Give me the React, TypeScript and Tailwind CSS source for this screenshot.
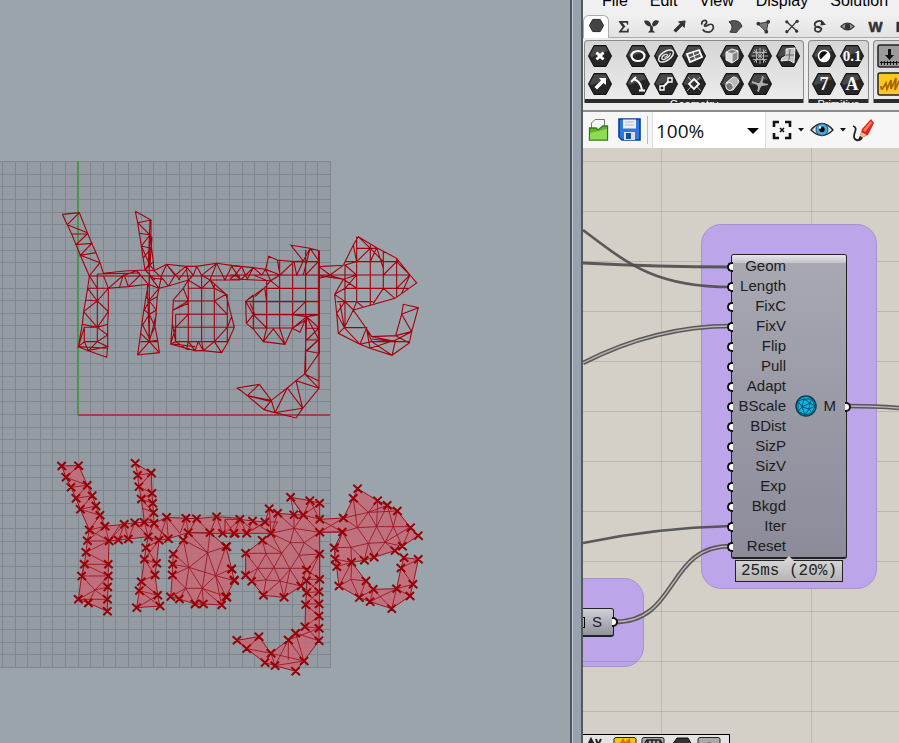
import React from "react";

/* ---------- viewport drawing ---------- */

const gridSteps = Array.from({ length: 41 }, (_, i) => i);

const wireLeft =
  "M67 43L118 38L142 98L155 130L168 158L180 188L190 220M67 43L82 74L95 102L108 134L121 166L148 228" +
  "M82 74L118 38M82 74L142 98M95 102H142L108 134L155 130L121 166L168 158M121 166L180 188L148 228" +
  "M148 228L143 265L137 300L131 335L127 373L115 440L145 452L200 472L203 440V373L205 335V265H143" +
  "M172 222V425H133V382H172M148 228L172 265M143 265L172 303L205 265M137 300L172 303L131 335L172 382L205 335L172 303" +
  "M127 373L172 382L203 373M172 382L203 405L172 425L145 452L203 440L172 425M133 425L115 440L133 382M115 440L200 445M145 452L133 425" +
  "M190 220L255 213L315 210L342 212M148 228H600M172 222L300 219M205 265L265 260L325 253" +
  "M205 265L250 226L238 263M190 226L205 265M265 260L253 226L290 212L300 226L265 260M290 212L325 253" +
  "M286 34L333 60V130L340 185L342 212M286 34L293 68L304 138L315 210M293 68L333 60M293 68L330 105L299 100M330 105L304 138L333 145L309 175M304 138L325 185M330 60L325 195L315 210M330 105L327 250M340 185L315 210L345 240M336 110L330 195L345 215" +
  "M325 253L318 290L310 340L302 400L293 465L358 458L353 420L345 380L349 330L352 290L357 265L325 253M328 210V425" +
  "M318 290L328 303L349 330L328 343L313 330L328 303M352 290L328 303M328 343L345 380L328 415L308 375L328 343M357 265L328 300M353 420L328 425L302 400M328 425L293 465M328 425L358 458M302 425H353M328 226L357 265L365 226M322 255L328 425L350 340" +
  "M342 212L380 193L438 199L470 199L530 190L600 200M357 265L385 258L445 240L485 265L510 240H600" +
  "M345 215L370 238L385 258M365 226L380 193L405 226L385 258M405 226L438 199L445 240M380 193L420 240M438 199L460 226L470 199L485 226L510 240L530 190L555 240L575 199L600 235M485 226L530 190M445 240L460 226M438 210L415 240M340 235L370 238" +
  "M430 265L400 300L397 370L392 432L465 452L490 452L545 458L562 430L583 382L575 350L558 283L510 240M430 265L445 240" +
  "M445 240V425M485 226V425M523 255V425M562 283V430M445 265H523M400 303H523M407 343H562M395 382H562M407 425H562M407 343V425" +
  "M430 265L445 303L400 330M400 330L445 310M407 382L445 343M523 265L510 240M523 303L558 283L523 265M523 303L562 343M575 350L562 382L583 382M392 432L407 382M392 432L407 425L440 447L445 425L465 452L475 425L490 452L485 425M490 452L523 425L545 458M400 432L465 440M562 382L523 425M397 370L407 425";

const wireRight =
  "M0 121L70 128L107 133L116 94L142 105L192 110L220 108L183 61L240 70L267 77V490L218 550L198 579L135 563L102 554L52 512L22 489L88 478L124 526L172 489L198 467L224 447L230 275L210 322L187 310L165 358L100 350L70 312L49 295L47 229L104 188L122 167L0 162" +
  "M0 150H267M0 162L15 150L35 125L52 162L70 128L95 150L107 133L122 167M35 162L70 128M15 150L35 165M70 150L107 165M116 94L107 133L150 150L142 105M150 150L122 167L150 190M150 150L192 110L200 150L220 108M183 61L220 108L240 70L220 150M240 70L267 108L227 150M192 110H267" +
  "M110 190H267M47 230H267M70 269H267M70 309H187M110 165V309M149 105V309M188 110V309M227 75V447M70 210V309M104 188L110 230M70 210L47 229L70 269L49 295M60 235L75 269M104 188L75 215M70 269L110 309L100 350L130 312L165 358L149 309M187 269L230 275L187 310L227 285M227 230L187 269M267 269L230 275L267 309L230 345H265L230 378L267 385L224 447M230 275L267 345M230 310H267M228 378L265 345M187 310L210 322" +
  "M224 447L267 490L198 467L218 550L172 489L135 563L218 550M135 563L124 526L52 512L88 478M102 554L124 526M224 447L265 467M52 512L124 530" +
  "M267 125L340 121L370 60L385 35L440 68L500 100L540 150L560 174L495 220L400 247L370 255L410 312L425 335L497 332L515 268L520 238L565 248L545 320L538 354L486 391L420 370L390 358L325 325L320 265L314 208L340 163L267 152M267 150H540M267 160L300 152L340 163M267 125L300 150L340 121" +
  "M380 35V230M421 60V240M460 78V190L430 235M500 100V215M380 70H440M345 110H505M342 190H535M320 230H430M370 60L380 110L345 120L380 150L340 163L380 190M380 110L421 70M385 35L421 70L460 110M440 68L421 110M440 68L460 130M460 150L500 110M500 110L540 150L500 190M540 150L515 205M460 190L495 220M380 150L345 190M345 120V310M314 208L345 190M320 265L345 230L370 255L380 230L400 247M320 265L343 308L370 255M314 208L345 230M330 235L343 308H410L390 358L343 308L325 325M410 312L425 350L390 358M425 335L497 350L425 342M497 332L538 354M425 350H538M497 345L486 391L425 350M420 370L410 312M497 345L420 370M515 268L545 320L497 332M515 268L565 248M497 345L545 320";

const solidLeft =
  "M65 48L116 47L142 106L157 137L168 168L180 196L195 229L253 223L285 218L313 217L308 175L304 147L297 110L293 76L286 40L334 69L336 130L338 160L341 188L342 220L380 202L438 205L470 206L530 200L600 205V250H510L445 248L385 266L357 271L350 340L345 375L353 436L360 468L290 473L298 422L304 395L313 328L318 293L325 260L265 267L235 270L207 273L205 343V378L202 484L145 459L115 448L125 378L133 343L138 307L142 272L148 240L121 178L108 145L93 112L78 82Z" +
  "M430 270L445 248H510L558 290L575 357L583 392L558 440L545 465L490 462L465 462L418 447L392 440L397 375L398 343L400 312Z";
const edgesLeft =
  "M78 82L116 47M78 82L142 106L93 112M108 145L142 106M108 145L157 137L121 178L168 168M121 178L180 196L148 240L195 229M148 240L207 273H142L195 229L207 273M207 273L138 307L205 343H133L205 378H125M133 343L125 378L165 420L205 378M165 420L115 448H202L165 420L203 411M165 420L145 459M207 273L253 223L235 270M265 267L253 223M265 267L285 218L325 260L313 217M207 273L240 225M293 76L334 69L297 110L336 130L304 147L338 160M304 147L341 188L308 175M341 188L313 217H342L325 260L357 271L380 202L385 266L342 220M318 293L357 271L313 328L350 340L318 293M313 328L345 375L304 395L353 436L298 422M298 422L360 468M290 473L353 436M380 202L420 250L438 205L445 248L470 206L510 248L530 200L548 250L600 205M345 230L385 266" +
  "M430 270L503 308L510 248M445 248L503 308L558 290L527 377L503 308L447 352L400 312M430 270L447 352L398 343M447 352L397 375L437 415L447 352L487 415L503 308M447 352L527 377L487 415H437L392 440M437 415L418 447M437 415L465 462L487 415L490 462M487 415L545 465L527 377L575 357M527 377L583 392M527 377L558 440L487 415";
const marksLeft = "65,48 116,47 142,106 157,137 168,168 180,196 195,229 253,223 285,218 313,217 304,147 297,110 293,76 286,40 334,69 336,130 338,160 341,188 342,220 380,202 438,205 470,206 530,200 585,250 548,250 510,248 445,248 385,266 357,271 350,340 345,375 353,436 360,468 290,473 298,422 304,395 313,328 318,293 325,260 265,267 235,270 207,273 205,343 205,378 203,411 202,448 202,484 145,459 115,448 125,378 133,343 138,307 142,272 148,240 121,178 108,145 93,112 78,82 430,270 558,290 575,357 583,392 558,440 545,465 490,462 465,462 418,447 392,440 397,375 398,343 400,312";

const solidRight =
  "M0 118H45L83 123L120 126L133 86L158 100L207 104L235 105L197 52L255 62L284 70V118L355 114L385 55L398 26L458 62L487 76L517 93L557 143L580 167L532 199L510 212L447 232L418 241L380 247L423 303L445 328L515 326L528 264L537 233L580 238L564 313L555 348L500 386L435 365L403 353L342 318L335 260L330 237L328 203L352 156L284 157V298L282 482L237 543L212 574L150 557L120 548L65 506L36 481L102 470L138 520L190 480L212 460L240 440L242 374L245 338V302L228 318L177 352L115 346L80 304L62 286V220L112 181L138 160H0Z";
const edgesRight =
  "M0 120L27 160L45 118L65 160L83 123L138 160M0 160L45 118L83 150L120 126L65 160M120 126H158L138 160L133 86M158 100L138 160L207 145L158 100M207 104V145L235 105L284 157L207 145L196 188L238 188L207 145M197 52L207 104M197 52L235 105L255 62L284 118L235 105L284 70M284 157L238 188L222 226L196 188L170 220L138 160L196 188M112 181L170 220H62M112 181L123 222L98 265L62 220M123 222L147 262L170 220L195 268L222 226L245 270L284 222L238 188M222 226L284 222M62 286L98 265H245L228 318L195 268L165 303L147 262L123 300L98 265L80 304L123 300L165 303L228 318M123 300L115 346L165 303L177 352L195 268M245 302L284 222V298L245 270M245 302L284 335L245 338L284 298H245M245 338L282 372H242L282 335M242 374L282 408L240 440L282 445L190 480M240 440L282 482L212 460L237 543L190 480V540M138 520L237 543M138 520L150 557L190 480M120 548L138 520L65 506L102 470M150 557L237 543" +
  "M284 118L352 156L284 157L355 114L397 143L352 156L378 202L430 190L397 143L430 97L385 55L397 143L455 140L430 97L458 62L455 140L480 187L430 190L455 140L487 76L505 140H455M355 114L430 97L517 93L505 140L480 187L532 199L505 140H557L480 187M557 143L532 199M480 187L510 212M430 97L487 76M430 190L447 232L480 187M328 203L378 202L380 247L330 237M335 260L380 247L342 318L378 298L403 353L423 303L378 298L380 247M378 202L418 241L430 190M352 156L328 230M403 353L445 328L435 365L515 326L500 386L445 328M515 326L555 348M528 264L564 313L515 326M528 264L580 238";
const marksRight = "5,200 20,267 28,300 5,352 45,118 83,123 120,126 133,86 158,100 207,104 235,105 197,52 255,62 284,70 284,118 355,114 385,55 398,26 458,62 487,76 517,93 557,143 580,167 532,199 510,212 447,232 418,241 380,247 423,303 445,328 515,326 528,264 537,233 580,238 564,313 555,348 500,386 435,365 403,353 342,318 335,260 330,237 328,203 352,156 284,157 284,222 284,298 282,335 282,372 282,408 282,445 282,482 237,543 212,574 150,557 120,548 65,506 36,481 102,470 138,520 190,480 212,460 240,440 242,374 245,338 245,302 245,270 228,318 177,352 115,346 80,304 62,286 62,220 112,181 138,160 65,160 27,160";

function Crosses({ points }: { points: string }) {
  const d = points
    .split(" ")
    .map((p) => {
      const [x, y] = p.split(",").map(Number);
      return `M${x - 13} ${y - 12}L${x + 13} ${y + 12}M${x + 12} ${y - 12}L${x - 12} ${y + 12}`;
    })
    .join("");
  return <path d={d} fill="none" stroke="#960006" strokeWidth="6" />;
}

function Viewport() {
  return (
    <section aria-label="Top viewport" className="min-w-0 flex-1 overflow-hidden bg-[#9ba3ab]">
      <svg width="570" height="743" viewBox="0 0 570 743" className="block">
        <rect x="0" y="161" width="330" height="507" fill="#949ba2" />
        <g stroke="#7f868e" strokeWidth="1" shapeRendering="crispEdges">
          {gridSteps.map((i) => {
            const y = Math.round(161 + i * 12.65) + 0.5;
            return <line key={"h" + i} x1="0" x2="331" y1={y} y2={y} />;
          })}
          {gridSteps.slice(0, 27).map((i) => {
            const x = Math.round(2 + i * 12.61) + 0.5;
            return <line key={"v" + i} x1={x} x2={x} y1="161" y2="668" />;
          })}
        </g>
        <path d="M78 161V415" stroke="#4b9350" strokeWidth="2" />
        <path d="M78 415H330" stroke="#a04049" strokeWidth="2" />
        <g fill="none" stroke="#a3000c" strokeWidth="3.3">
          <path d={wireLeft} transform="translate(40 200) scale(.3333)" />
          <path d={wireRight} transform="translate(230 225) scale(.3333)" />
          <path d="M319 251V354" strokeWidth="1.6" />
        </g>
        <g transform="translate(40 450) scale(.3333)">
          <path d={solidLeft} fill="#c56a76" fillOpacity=".85" stroke="#9b1420" strokeWidth="3" />
          <path d={edgesLeft} fill="none" stroke="#9b1420" strokeWidth="2.6" />
          <Crosses points={marksLeft} />
        </g>
        <g transform="translate(225 480) scale(.3333)">
          <path d={solidRight} fill="#c56a76" fillOpacity=".85" stroke="#9b1420" strokeWidth="3" />
          <path d={edgesRight} fill="none" stroke="#9b1420" strokeWidth="2.6" />
          <Crosses points={marksRight} />
        </g>
      </svg>
    </section>
  );
}

/* ---------- menu and tabs ---------- */

const menus = ["File", "Edit", "View", "Display", "Solution"];

const tabs: { name: string; icon: React.ReactNode }[] = [
  { name: "Params", icon: <path d="M4 1.500H12L15.500 8L12 14.500H4L.5 8Z" fill="#444" stroke="#222" /> },
  {
    name: "Maths",
    icon: <path d="M3 2H13V6H12L11 4H7L10 8L6 12.500H11.500L12.500 10H13.500V14.500H3V13.500L7 8.500L3 3Z" fill="#333" />,
  },
  {
    name: "Sets",
    icon: <path d="M0 2C5 0 8 4 7.500 8C4 8 1 6 0 2ZM16 2C11 0 8.500 3 8.500 8C12 8 15 6 16 2ZM6.500 7H9.500V12L12 14.500H4L6.500 12Z" fill="#333" />,
  },
  { name: "Vector", icon: <path d="M7 3L14 2L13 9L11 7L4 14L2 12L9 5Z" fill="#333" stroke="#333" /> },
  {
    name: "Curve",
    icon: <path d="M2 6C1 1 8 0 7 4C6 6 4 6 5 7.500C7 9 10 4 13 6C16 9 13 14 9 14C6 14 4 13 3 11" fill="none" stroke="#333" strokeWidth="1.800" />,
  },
  { name: "Surface", icon: <path d="M1 3Q8 0 13 4L15 8Q12 10 9 14.500L2 14Q7 8 1 3Z" fill="#555" stroke="#333" /> },
  {
    name: "Mesh",
    icon: (
      <>
        <path d="M2 5L13 3L11 14Z" fill="#777" stroke="#333" />
        <g fill="#333"><circle cx="2.500" cy="5" r="2" /><circle cx="13" cy="3" r="2" /><circle cx="11" cy="13.500" r="2" /></g>
      </>
    ),
  },
  {
    name: "Intersect",
    icon: (
      <>
        <path d="M3 3Q7 7 14 13M14 2L3 14" fill="none" stroke="#333" strokeWidth="1.400" />
        <g fill="#333"><circle cx="3" cy="3" r="1.700" /><circle cx="14" cy="2.500" r="1.700" /><circle cx="3" cy="13.500" r="1.700" /><circle cx="13.500" cy="13" r="1.700" /></g>
      </>
    ),
  },
  {
    name: "Transform",
    icon: (
      <>
        <path d="M12 4C8 0 2 3 3 7C4 10 11 8 10 11C9 15 3 14 3 11C3 8 8 7 9 10" fill="none" stroke="#333" strokeWidth="1.800" />
        <path d="M10 1L15 6L9 7Z" fill="#333" />
      </>
    ),
  },
  {
    name: "Display",
    icon: (
      <>
        <path d="M1 8Q8 1 15 8Q8 15 1 8Z" fill="#aaa" stroke="#333" strokeWidth="1.300" />
        <circle cx="8" cy="8" r="3" fill="#333" />
      </>
    ),
  },
  {
    name: "Wb",
    icon: (
      <text x="8" y="14" textAnchor="middle" stroke="#333" strokeWidth=".6" className="fill-[#333] font-['Liberation_Sans'] text-[16px] font-bold">W</text>
    ),
  },
  { name: "Extra", icon: <path d="M2 3V14" stroke="#333" strokeWidth="3" /> },
];

/* ---------- ribbon ---------- */

const w = { fill: "none", stroke: "#fff", strokeWidth: 1.6 };

const glyphs: Record<string, React.ReactNode> = {
  Point: <path d="M8.500 7.500L15.500 14.500M15.500 7.500L8.500 14.500" {...w} strokeWidth="3" />,
  Vector: <path d="M11 5H18V12L15.500 10L9 16.500L6.500 14L13 7.500Z" fill="#fff" />,
  Circle: <ellipse cx="12" cy="11" rx="6.500" ry="5" {...w} strokeWidth="2.200" />,
  Curve: (
    <g fill="none" stroke="#eee" transform="rotate(-35 12 11)">
      <ellipse cx="12" cy="11" rx="8.500" ry="4.500" strokeWidth="1.500" />
      <path d="M17 11C16 14 7 14 7 11C8 8 14 9 14 11C13 12 11 12 10 11" strokeWidth="1.200" />
    </g>
  ),
  Surface: (
    <>
      <path d="M5 9L17 5L20 12L8 17Z" fill="#555" stroke="#fff" strokeWidth="1.800" />
      <path d="M11 7L12 11L14 15M7 13L19 8" fill="none" stroke="#fff" />
    </>
  ),
  Box: (
    <>
      <path d="M6 7L12 4L18 6V14L12 18L6 15Z" fill="#888" />
      <path d="M6 7L12 9V18L6 15Z" fill="#ddd" />
      <path d="M6 7L12 4L18 6V14L12 18L6 15ZM6 7L12 9L18 6M12 9V18" fill="none" stroke="#f2f2f2" />
    </>
  ),
  Mesh: <path d="M5 7.500H19M4 11H20M5 14.500H19M8.500 4V18M12 3V19M15.500 4V18M6 5L18 17M18 5L6 17" {...w} strokeWidth=".8" stroke="#ccc" />,
  Geometry: (
    <>
      <path d="M10 4L19 3L18 18L13 15L5 16L6 13L10 11Z" fill="#c4c4c4" stroke="#eee" />
      <path d="M14 4L13 15M10 10L18 10" stroke="#666" fill="none" />
    </>
  ),
  Arc: <path d="M7 6Q15 8 16 17M5 9L10 4M13 17.500H19" {...w} strokeWidth="2" />,
  Line: (
    <>
      <path d="M8 15L16 7" {...w} strokeWidth="2" />
      <path d="M6 13H10V17H6ZM14 5H18V9H14Z" fill="#222" stroke="#fff" strokeWidth="1.400" />
    </>
  ),
  Plane: (
    <>
      <path d="M6 4L19 18M18 4L5 18" stroke="#aaa" />
      <path d="M12 6L17 11L12 16L7 11Z" fill="#333" stroke="#fff" strokeWidth="1.800" />
    </>
  ),
  Brep: (
    <>
      <path d="M6 10L13 4Q18 4 19 9L13 17Q6 18 6 10Z" fill="#bbb" stroke="#eee" />
      <ellipse cx="9.500" cy="13.500" rx="3.500" ry="4" fill="#777" stroke="#eee" transform="rotate(-30 9.500 13.500)" />
    </>
  ),
  Field: <path d="M4 8Q9 10 11 10Q13 9 14 3L16 4Q14 8 15 10L20 11V12L14 13Q12 14 11 19L9 18Q11 14 9 12L4 10Z" fill="#b0b0b0" />,
  Boolean: (
    <>
      <circle cx="12" cy="11" r="5.500" fill="#111" stroke="#fff" strokeWidth="1.600" />
      <path d="M16 7A5.500 5.500 0 0 1 8 15Z" fill="#fff" />
    </>
  ),
  Number: (
    <text x="12" y="16" textAnchor="middle" className="fill-white font-['Liberation_Serif'] text-[15px] font-bold">0.1</text>
  ),
  Integer: (
    <text x="12" y="17" textAnchor="middle" className="fill-white font-['Liberation_Serif'] text-[18px] font-bold">7</text>
  ),
  Text: (
    <text x="12" y="17" textAnchor="middle" className="fill-white font-['Liberation_Serif'] text-[18px] font-bold">A</text>
  ),
};

function Hex({ name }: { name: string }) {
  return (
    <button type="button" aria-label={name} className="size-6">
      <svg viewBox="0 0 24 22" className="h-[22px] w-6">
        <path d="M6 .5H18L23.500 11L18 21.500H6L.5 11Z" fill="#262626" stroke="#111" />
        <path d="M6.500 1.500H17.500L20 6L4 12L1.500 11Z" fill="#484848" />
        {glyphs[name]}
      </svg>
    </button>
  );
}

function IconGrid({ rows }: { rows: string[][] }) {
  return (
    <div className="flex flex-col gap-1">
      {rows.map((row) => (
        <div key={row[0]} className="flex gap-1">
          {row.map((n) => (
            <Hex key={n} name={n} />
          ))}
        </div>
      ))}
    </div>
  );
}

const Divider = () => <div className="h-[50px] w-px bg-[#bdbdbd]" />;

function Panel({ title, className, children }: { title: string; className: string; children: React.ReactNode }) {
  return (
    <div className={`flex h-[63px] shrink-0 flex-col overflow-hidden rounded-t border border-b-0 border-[#8a8a8a] bg-linear-to-b from-[#d5d5d5] to-[#ededed] ${className}`}>
      <div className="flex h-[58px] gap-[7px] px-[3px] pt-[3px]">{children}</div>
      <div className="h-1 overflow-hidden bg-[#2b2b2b] text-center text-[11px] leading-[10px] text-white">{title}</div>
    </div>
  );
}

function SquareButton({ name, yellow }: { name: string; yellow?: boolean }) {
  return (
    <button type="button" aria-label={name} className="size-6">
      <svg viewBox="0 0 24 24" className="size-6">
        <rect x="1" y="1" width="26" height="22" rx="2" fill={yellow ? "#fbc823" : "#9b9b9b"} stroke="#222" strokeWidth="1.500" />
        {yellow ? (
          <path d="M4 14Q4 19 6 16L9 11L10 17L14 8L14 17L19 6L18 18L22 9" fill="none" stroke="#a86400" strokeWidth="1.800" />
        ) : (
          <path d="M11 5H14V11H17L12.500 16L8 11H11ZM3 18H24V19H3ZM4 17H5V21H4ZM7 17H8V21H7ZM10 17H11V21H10ZM13 17H14V21H13ZM16 17H17V21H16ZM19 17H20V21H19Z" fill="#111" />
        )}
      </svg>
    </button>
  );
}

/* ---------- toolbar ---------- */

const Caret = () => (
  <svg viewBox="0 0 6 4" className="h-1 w-[6px]">
    <path d="M0 0H6L3 3.500Z" fill="#111" />
  </svg>
);

function Toolbar() {
  return (
    <div className="flex h-9 shrink-0 items-center overflow-hidden bg-[#f6f6f6] pl-[5px]">
      <button type="button" aria-label="Open" className="mr-2 shrink-0">
        <svg width="22" height="24" viewBox="0 0 22 24">
          <path d="M3.500 12V5L7 1.500H16.500V12" fill="#f6f6f6" stroke="#777" />
          <path d="M1.500 22V10H8L10 12L15 8H19.500V22Z" fill="#62b42c" stroke="#35761c" strokeWidth="1.300" />
          <path d="M2 21.500V15L19 11V21.500Z" fill="#8fdc52" />
        </svg>
      </button>
      <button type="button" aria-label="Save" className="mr-[6px] shrink-0">
        <svg width="23" height="24" viewBox="0 0 23 24">
          <path d="M1 1H22V22H4L1 19Z" fill="#2d79dc" stroke="#0b3c91" strokeWidth="1.600" />
          <rect x="5" y="1.500" width="13" height="9" fill="#eee" />
          <path d="M7 4H16M7 7H16" stroke="#bbb" />
          <rect x="6" y="14" width="11" height="8" fill="#ddd" />
          <rect x="8" y="15" width="5" height="6" fill="#174ea5" />
        </svg>
      </button>
      <div className="mr-1 h-7 w-px shrink-0 bg-[#bbb]" />
      <label className="relative mr-[6px] h-9 w-[114px] shrink-0">
        <span className="sr-only">Zoom</span>
        <select className="h-full w-full appearance-none border-x border-[#ddd] bg-white pt-[2px] pl-[3px] font-['Open_Sans',sans-serif] text-[19px] text-[#111]">
          <option>100%</option>
        </select>
        <svg viewBox="0 0 12 6" className="pointer-events-none absolute top-4 right-[7px] h-[6px] w-3">
          <path d="M0 0H12L6 6Z" fill="#000" />
        </svg>
      </label>
      <button type="button" aria-label="Zoom extents" className="mr-[6px] shrink-0">
        <svg width="20" height="20" viewBox="0 0 20 20" fill="none" stroke="#111" strokeWidth="2.600">
          <path d="M7 2H2V7M13 2H18V7M2 13V18H7M18 13V18H13" />
          <path d="M8 8L12 12M12 8L8 12" strokeWidth="1.600" />
        </svg>
      </button>
      <Caret />
      <button type="button" aria-label="Preview" className="mx-[6px] shrink-0">
        <svg width="24" height="18" viewBox="0 0 24 18">
          <path d="M1 9Q12 -4 23 9Q12 20 1 9Z" fill="#cfe8f4" stroke="#222" strokeWidth="1.300" />
          <circle cx="12" cy="8.500" r="6" fill="#4da5d8" stroke="#1c4a68" />
          <circle cx="12" cy="8.500" r="2.700" fill="#000" />
          <circle cx="10" cy="6.500" r="1.200" fill="#fff" />
        </svg>
      </button>
      <Caret />
      <button type="button" aria-label="Sketch" className="ml-1 shrink-0">
        <svg width="24" height="24" viewBox="0 0 24 24">
          <path d="M3 8Q7 9 5 14T5 21Q8 24 12 20" fill="none" stroke="#222" strokeWidth="1.800" />
          <path d="M9 21L12 11L21 1L24 5L18 17Z" fill="#d6281c" />
          <path d="M13 12L21 3L22 5L15 14Z" fill="#ff7a5c" />
          <path d="M9 21L11 14L17 17Z" fill="#e9b98a" />
          <path d="M8 22L10 18L13 20Z" fill="#222" />
        </svg>
      </button>
    </div>
  );
}

/* ---------- node canvas ---------- */

const inputs = ["Geom", "Length", "FixC", "FixV", "Flip", "Pull", "Adapt", "BScale", "BDist", "SizP", "SizV", "Exp", "Bkgd", "Iter", "Reset"];

const doubleWires = [
  "M583 363C630 339 680 326 731 326",
  "M614 622C680 622 665 546 731 546",
  "M847 406Q875 406 899 408",
];

function Wires() {
  return (
    <svg width="316" height="595" viewBox="583 148 316 595" className="absolute inset-0" fill="none">
      <g stroke="#4d4a4c" strokeOpacity=".9">
        <path d="M583 263C640 266 680 267 731 267" strokeWidth="3" />
        <path d="M583 230C628 264 655 287 731 287" strokeWidth="2.600" />
        <path d="M583 543C640 531 690 527 731 526" strokeWidth="2.600" />
        {doubleWires.map((d) => (
          <path key={d} d={d} strokeWidth="4.600" />
        ))}
      </g>
      {doubleWires.map((d) => (
        <path key={d} d={d} stroke="#b9b4b4" strokeWidth="1.400" />
      ))}
    </svg>
  );
}

const portLeft = "absolute -left-[5px] h-[10px] w-[6px] rounded-l-full border-2 border-r-0 border-[#151515] bg-white";
const portRight = "absolute -right-[5px] h-[10px] w-[6px] rounded-r-full border-2 border-l-0 border-[#151515] bg-white";
const nodeFont = "font-['Liberation_Sans',Arial,sans-serif] text-[15px] text-[#1c1c20]";

function Canvas() {
  return (
    <main className="relative min-h-0 flex-1 overflow-hidden bg-[#d4d0c8]">
      <svg width="316" height="595" viewBox="583 148 316 595" className="absolute inset-0" stroke="#bebab3" shapeRendering="crispEdges">
        <path d="M661.500 148V743M811.500 148V743" />
      </svg>
      <div className="absolute top-[76px] left-[118px] h-[365px] w-[176px] rounded-[20px] border border-[#a692cc] bg-[#bca6e9]" />
      <div className="absolute top-[430px] -left-6 h-[89px] w-[85px] rounded-[20px] border border-[#a692cc] bg-[#bca6e9]" />
      <svg width="316" height="595" viewBox="583 148 316 595" className="absolute inset-0" stroke="#000" strokeOpacity=".12" shapeRendering="crispEdges">
        <path d="M583 161.500H899M583 211.500H899M583 261.500H701M877 261.500H899M583 311.500H701M877 311.500H899M583 361.500H701M877 361.500H899M583 411.500H701M877 411.500H899M583 461.500H701M877 461.500H899M583 511.500H701M877 511.500H899M583 561.500H701M877 561.500H899M644 611.500H899M583 661.500H899M583 711.500H899" />
      </svg>
      <Wires />

      <article aria-label="Mesh machine" className="absolute top-[106px] left-[148px] w-[116px] rounded-[3px] border border-b-2 border-[#222] bg-linear-to-b from-[#a9a9b3] to-[#8b8b9a]">
        <div className="absolute inset-x-0 top-0 h-2 rounded-t-[2px] bg-linear-to-b from-[#e6e6ea] to-[#c3c3ca]" />
        <ul className="relative flex flex-col pt-px pb-px">
          {inputs.map((n) => (
            <li key={n} className={`relative h-5 pr-[60px] text-right leading-5 ${nodeFont}`}>
              <span className={`${portLeft} top-[6px]`} />
              {n}
              {n === "BScale" && (
                <span className="absolute inset-y-0 right-[10px] flex items-center gap-[7px]">
                  <svg width="22" height="22" viewBox="0 0 22 22">
                    <circle cx="11" cy="11" r="10" fill="#12b4e0" stroke="#0b3c50" strokeWidth="1.500" />
                    <path d="M3 6L9 4L17 4L20 11L17 18L10 20L3 16ZM9 4L7 12L3 6M7 12L3 16M7 12L14 14L10 20L7 12M9 4L15 8L14 14L17 18M15 8L20 11L14 14M15 8L17 4M7 12L15 8" fill="none" stroke="#075571" />
                  </svg>
                  M
                </span>
              )}
            </li>
          ))}
        </ul>
        <span className={`${portRight} top-[147px]`} />
      </article>

      <div className="absolute top-[412px] left-[152px] border border-[#222] bg-linear-to-b from-[#d4d4d4] to-[#b4b4b4] px-[5px] font-['Liberation_Mono',monospace] text-[16px] leading-5 whitespace-pre text-[#222]">
        25ms (20%)
        <svg viewBox="0 0 10 5" className="absolute -top-[5px] left-12 h-[5px] w-[10px]">
          <path d="M0 5L5 0L10 5Z" fill="#d4d4d4" />
        </svg>
      </div>

      <article aria-label="Source" className={`absolute top-[460px] -left-2 flex h-[29px] w-[39px] items-center gap-[7px] rounded-[3px] border border-b-2 border-[#222] bg-linear-to-b from-[#d0d0d6] to-[#92929e] pl-1 ${nodeFont}`}>
        <span className="h-[11px] w-[5px] border border-black" />
        S
        <span className={`${portRight} top-2`} />
      </article>

      <div className="absolute bottom-0 left-0 flex h-[9px] w-[147px] overflow-hidden border-t border-r border-black bg-[#e4e4e4] pt-[2px] pl-1">
        <svg width="140" height="8" viewBox="0 0 140 8" className="shrink-0">
          <path d="M1 8L4 2L7 8M9 2L11 8L14 2M3 6H7" fill="none" stroke="#222" strokeWidth="2" />
          <rect x="27" y=".5" width="22" height="12" rx="2" fill="#fbc415" stroke="#222" />
          <path d="M33 8L36 3L38 7L42 3L43 8" fill="none" stroke="#e06a00" strokeWidth="2" />
          <rect x="55" y=".5" width="22" height="12" rx="2" fill="#aaa" stroke="#222" />
          <path d="M57 8L60 3L73 3L76 8M61 8V3M65 8V2M69 8V3M73 8V4" fill="none" stroke="#222" strokeWidth="1.500" />
          <path d="M85 8L90 1H101L105 8Z" fill="#333" stroke="#111" />
          <rect x="111" y=".5" width="22" height="12" rx="2" fill="#aaa" stroke="#222" />
          <path d="M118 8Q122 2 126 8" fill="#666" />
        </svg>
      </div>
    </main>
  );
}

export default function App() {
  return (
    <div className="flex h-screen overflow-hidden bg-[#9ba3ab] font-['Liberation_Sans',Arial,sans-serif]">
      <Viewport />
      <div className="flex w-[13px] shrink-0 border-r-2 border-[#55585c] bg-[#97a2ae]">
        <div className="w-[2px] bg-[#50565e]" />
        <div className="w-px bg-[#c3cad1]" />
      </div>
      <div className="flex w-[316px] shrink-0 flex-col overflow-hidden bg-[#f0f0f0]">
        <nav className="flex h-[9px] shrink-0 items-end gap-[22px] overflow-hidden pl-[19px]">
          {menus.map((m) => (
            <button key={m} type="button" className="text-[16px] leading-4 text-black">
              {m}
            </button>
          ))}
        </nav>
        <div role="tablist" className="mt-[6px] flex h-[23px] shrink-0 overflow-hidden bg-linear-to-b from-[#f0f0f0] to-[#e2e2e2]">
          {tabs.map((t, i) => (
            <button
              key={t.name}
              type="button"
              role="tab"
              aria-label={t.name}
              aria-selected={i === 0}
              className={
                i === 0
                  ? "flex w-[26px] shrink-0 items-start justify-center rounded-t-md border border-b-0 border-[#aaa] bg-white pt-[2px]"
                  : "flex w-7 shrink-0 items-start justify-center border-b border-[#aaa] pt-1"
              }
            >
              <svg width="15" height="15" viewBox="0 0 16 16">
                {t.icon}
              </svg>
            </button>
          ))}
        </div>
        <div className="flex h-[74px] shrink-0 items-start gap-1 overflow-hidden border-b-2 border-[#8c8c8c] bg-[#ececec] pt-[2px] pl-px">
          <Panel title="Geometry" className="w-[220px]">
            <IconGrid rows={[["Point"], ["Vector"]]} />
            <Divider />
            <IconGrid rows={[["Circle", "Curve", "Surface"], ["Arc", "Line", "Plane"]]} />
            <Divider />
            <IconGrid rows={[["Box", "Mesh", "Geometry"], ["Brep", "Field"]]} />
          </Panel>
          <Panel title="Primitive" className="w-[61px]">
            <IconGrid rows={[["Boolean", "Number"], ["Integer", "Text"]]} />
          </Panel>
          <Panel title="" className="w-[60px]">
            <div className="flex flex-col gap-1">
              <SquareButton name="Import" />
              <SquareButton name="Graph" yellow />
            </div>
          </Panel>
        </div>
        <Toolbar />
        <Canvas />
      </div>
    </div>
  );
}
